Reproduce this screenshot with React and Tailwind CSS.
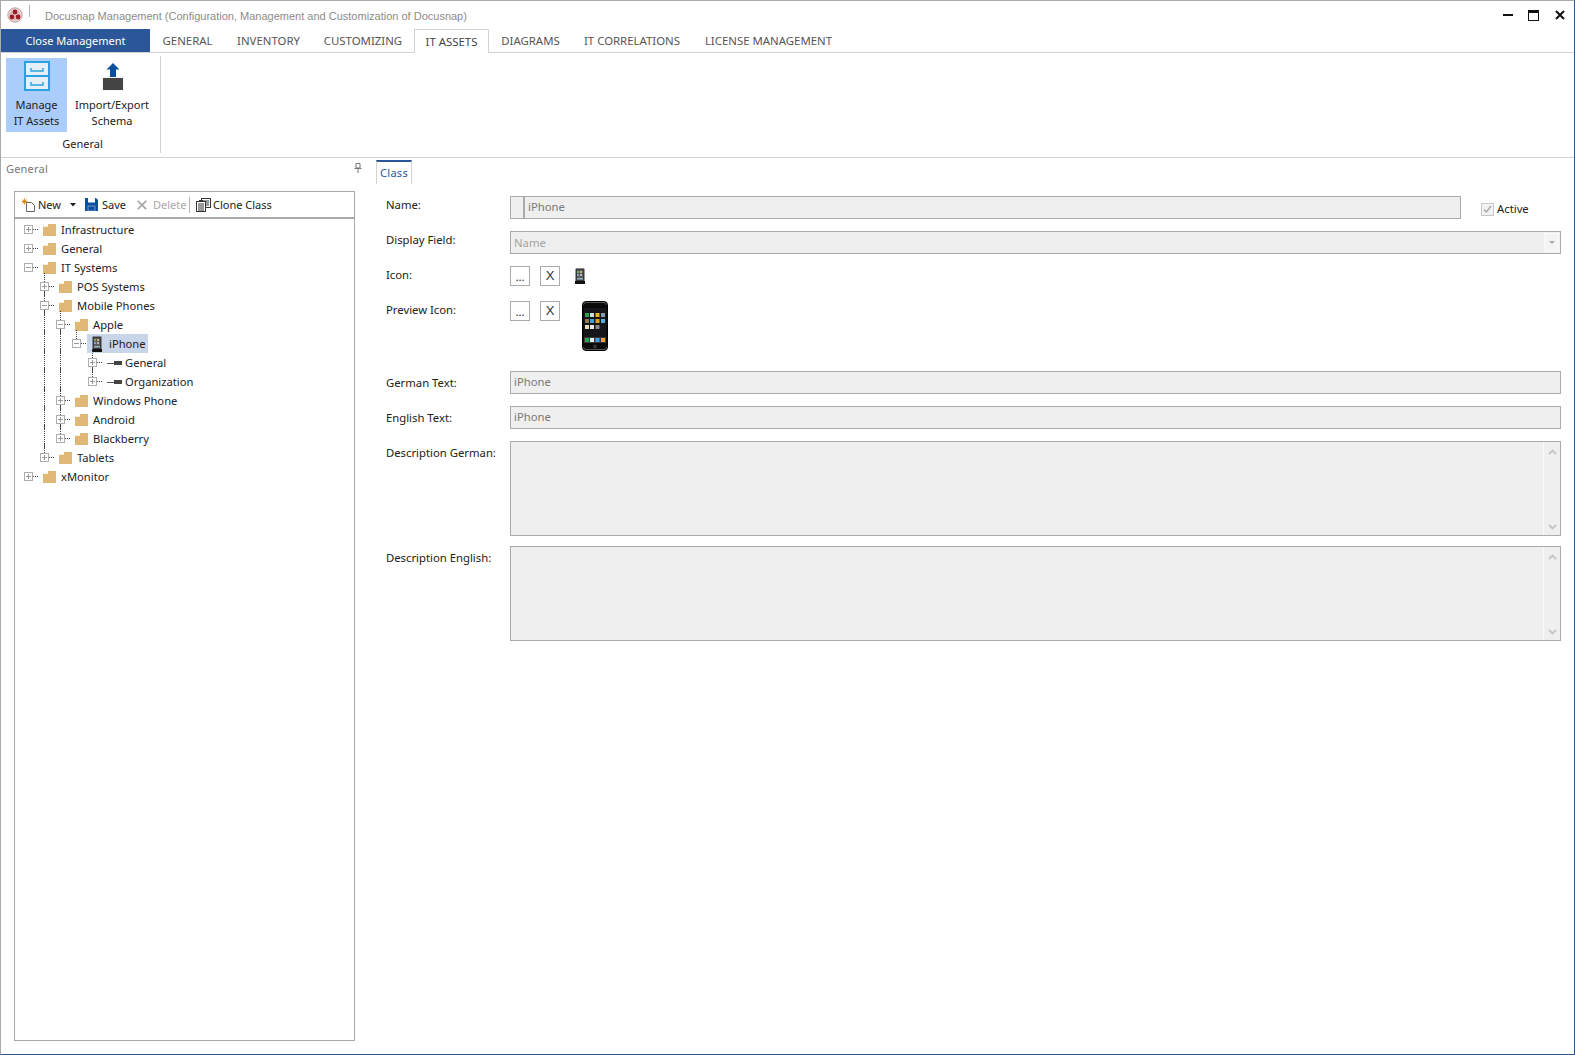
import React from "react";

const Tabs = [
  ["GENERAL", "w-[75px]"],
  ["INVENTORY", "w-[87px]"],
  ["CUSTOMIZING", "w-[102px]"],
  ["IT ASSETS", "w-[75px]", true],
  ["DIAGRAMS", "w-[83px]"],
  ["IT CORRELATIONS", "w-[120px]"],
  ["LICENSE MANAGEMENT", "w-[153px]"],
];

function Logo() {
  return (
    <svg width="16" height="16" viewBox="0 0 16 16">
      <circle cx="8" cy="8" r="7.2" fill="#e9d5d5" stroke="#b98a8a" strokeWidth="0.8" />
      <circle cx="8" cy="8" r="5.6" fill="#d9c0c0" />
      <circle cx="8" cy="5" r="2.4" fill="#a01c22" />
      <circle cx="4.9" cy="10" r="2.4" fill="#a01c22" />
      <circle cx="11.1" cy="10" r="2.4" fill="#a01c22" />
    </svg>
  );
}

function WindowButtons() {
  return (
    <div className="flex items-center h-full pr-[9px]">
      <svg width="10" height="12" viewBox="0 0 10 12" className="mr-[15px]">
        <rect x="0" y="5" width="10" height="2" fill="#111" />
      </svg>
      <svg width="11" height="11" viewBox="0 0 11 11" className="mr-[16px]">
        <rect x="0.5" y="0.5" width="10" height="10" fill="none" stroke="#111" />
        <rect x="0" y="0" width="11" height="3" fill="#111" />
      </svg>
      <svg width="10" height="10" viewBox="0 0 10 10">
        <path d="M1 1 L9 9 M9 1 L1 9" stroke="#111" strokeWidth="2" />
      </svg>
    </div>
  );
}

function CabinetIcon() {
  return (
    <svg width="26" height="30" viewBox="0 0 26 30">
      <rect x="0" y="0" width="26" height="30" fill="#2ba2e0" />
      <rect x="2" y="2" width="22" height="12" fill="#e6eef6" />
      <rect x="2" y="16" width="22" height="12" fill="#e6eef6" />
      <path d="M7 7 V10 H19 V7" fill="none" stroke="#2ba2e0" strokeWidth="1.4" />
      <path d="M7 21 V24 H19 V21" fill="none" stroke="#2ba2e0" strokeWidth="1.4" />
    </svg>
  );
}

function ImportIcon() {
  return (
    <svg width="22" height="28" viewBox="0 0 22 28" className="ml-[1px]">
      <rect x="0" y="13" width="22" height="15" fill="#f6f6f6" />
      <path d="M11 0 L17.5 6.5 H14 V14 H8 V6.5 H4.5 Z" fill="#0c4f9e" />
      <rect x="1" y="15" width="20" height="12" fill="#444" />
    </svg>
  );
}

function Folder() {
  return (
    <svg width="14" height="12" viewBox="0 0 14 13" preserveAspectRatio="none" className="shrink-0">
      <path d="M0 3 H5 V0 H13 V13 H0 Z" fill="#dfb878" />
    </svg>
  );
}

function SmallPhone() {
  return (
    <svg width="10" height="16" viewBox="0 0 10 16" className="shrink-0">
      <rect x="0.5" y="0" width="9" height="16" rx="1.5" fill="#3a3a3a" />
      <rect x="1" y="0" width="8" height="1" fill="#8a8a8a" />
      <rect x="2" y="2" width="6" height="10" fill="#5b5b5b" />
      <rect x="2" y="3" width="2" height="2" fill="#6fae6a" />
      <rect x="5" y="3" width="2" height="2" fill="#c9b36a" />
      <rect x="2" y="6" width="2" height="2" fill="#7fa6c9" />
      <rect x="5" y="6" width="2" height="2" fill="#b9b9b9" />
      <rect x="2" y="10" width="6" height="1.5" fill="#8fb0c4" />
      <rect x="0" y="13" width="10" height="3" fill="#111" />
    </svg>
  );
}

function ClassAttrIcon() {
  return (
    <svg width="15" height="6" viewBox="0 0 15 6" className="shrink-0">
      <rect x="0" y="3" width="7" height="1" fill="#555" />
      <rect x="7" y="1" width="8" height="4" fill="#444" />
    </svg>
  );
}

const apps = [
  [3, 12, "#1fa84f"], [8, 12, "#d8d8d8"], [13.5, 12, "#e4b822"], [19, 12, "#7f9db5"],
  [3, 18, "#8b7a58"], [8, 18, "#3f9edc"], [13.5, 18, "#e0a020"], [19, 18, "#4db0e6"],
  [3, 24, "#e8dfb8"], [8, 24, "#e8e8e8"], [13.5, 24, "#8a8a8a"],
  [3, 37, "#1fa84f"], [8, 37, "#e4eef6"], [13.5, 37, "#3f9edc"], [19, 37, "#eda128"],
];

function BigPhone() {
  return (
    <svg width="26" height="50" viewBox="0 0 26 50">
      <rect x="0.5" y="0.5" width="25" height="49" rx="3.5" fill="#0a0a0a" stroke="#000" />
      <path d="M1.5 4 Q1.5 1.5 4 1.5 H22 Q24.5 1.5 24.5 4 M1.5 46 Q1.5 48.5 4 48.5 H22 Q24.5 48.5 24.5 46" fill="none" stroke="#777" strokeWidth="0.7" />
      <rect x="2" y="7" width="22" height="35" fill="#15151a" />
      <rect x="2" y="36" width="22" height="6" fill="#3a3a3a" />
      {apps.map(([x, y, c], i) => (
        <rect key={i} x={x} y={y} width="4" height="4" fill={c} />
      ))}
      <circle cx="13" cy="45.5" r="2" fill="#333" />
    </svg>
  );
}

function Box({ open }) {
  return (
    <span className="relative z-10 w-[9px] h-[9px] border border-[#adadad] bg-white flex items-center justify-center shrink-0">
      <span className="absolute w-[5px] h-px bg-[#9a9a9a]" />
      {!open && <span className="absolute w-px h-[5px] bg-[#9a9a9a]" />}
    </span>
  );
}

const rows = [
  { t: "Infrastructure", l: 0, g: [] },
  { t: "General", l: 0, g: [] },
  { t: "IT Systems", l: 0, g: [], open: true },
  { t: "POS Systems", l: 1, g: [[1, 1]] },
  { t: "Mobile Phones", l: 1, g: [[1, 1]], open: true },
  { t: "Apple", l: 2, g: [[1, 1], [2, 1]], open: true },
  { t: "iPhone", l: 3, g: [[1, 1], [2, 1], [3, 0]], open: true, kind: "phone" },
  { t: "General", l: 4, g: [[1, 1], [2, 1], [4, 1]], kind: "attr" },
  { t: "Organization", l: 4, g: [[1, 1], [2, 1], [4, 0]], kind: "attr" },
  { t: "Windows Phone", l: 2, g: [[1, 1], [2, 1]] },
  { t: "Android", l: 2, g: [[1, 1], [2, 1]] },
  { t: "Blackberry", l: 2, g: [[1, 1], [2, 0]] },
  { t: "Tablets", l: 1, g: [[1, 0]] },
  { t: "xMonitor", l: 0, g: [] },
];

function TreeRow({ row }) {
  const { t, l, g, open, kind } = row;
  return (
    <div className="relative h-[19px] flex items-center text-[11.2px]" style={{ paddingLeft: 9 + l * 16 }}>
      {g.map(([c, full]) => (
        <span
          key={c}
          className="absolute top-[-4px] border-l border-dotted border-[#444]"
          style={{ left: 13 + c * 16, height: full ? 23 : 13 }}
        />
      ))}
      <Box open={open} />
      <span className="w-[5px] border-t border-dotted border-[#444] shrink-0" />
      {kind === "phone" ? (
        <span className="flex items-center h-[19px] bg-[#c9d5e8] ml-[1px] pl-[5px] pr-[2px]">
          <SmallPhone />
          <span className="ml-[7px] text-[#222]">{t}</span>
        </span>
      ) : kind === "attr" ? (
        <span className="flex items-center ml-[5px]">
          <ClassAttrIcon />
          <span className="ml-[3px] text-[#222]">{t}</span>
        </span>
      ) : (
        <span className="flex items-center ml-[5px]">
          <Folder />
          <span className="ml-[4px] text-[#222]">{t}</span>
        </span>
      )}
    </div>
  );
}

function Toolbar() {
  return (
    <div className="h-[27px] border-b-2 border-[#a9a9a9] flex items-center pl-[6px] text-[#222] shrink-0">
      <svg width="15" height="14" viewBox="0 0 15 14" className="mr-[2px]">
        <path d="M5.5 4.5 H10.5 L13.5 7.5 V13.5 H5.5 Z" fill="#fff" stroke="#666" />
        <path d="M3.5 0.5 V6.5 M0.5 3.5 H6.5 M1.4 1.4 L5.6 5.6 M5.6 1.4 L1.4 5.6" stroke="#e2901c" strokeWidth="1" />
      </svg>
      <span className="w-[26px]">New</span>
      <svg width="6" height="4" viewBox="0 0 6 4" className="ml-[6px] mr-[9px]">
        <path d="M0 0 H6 L3 3.5 Z" fill="#222" />
      </svg>
      <svg width="13" height="13" viewBox="0 0 13 13" className="mr-[4px]">
        <path d="M0 0 H11 L13 2 V13 H0 Z" fill="#0c4f9e" />
        <rect x="3" y="0" width="7" height="4.5" fill="#fff" />
        <rect x="3" y="8" width="7" height="5" fill="#0c4f9e" stroke="#fff" strokeWidth="0.4" />
      </svg>
      <span className="w-[26px]">Save</span>
      <svg width="10" height="10" viewBox="0 0 10 10" className="ml-[9px] mr-[6px]">
        <path d="M0.8 0.8 L9.2 9.2 M9.2 0.8 L0.8 9.2" stroke="#a8a8a8" strokeWidth="1.7" />
      </svg>
      <span className="w-[33px] text-[#a8a8a8]">Delete</span>
      <span className="w-px h-[16px] bg-[#b5b5b5] ml-[3px] mr-[6px]" />
      <svg width="15" height="14" viewBox="0 0 15 14" className="mr-[2px]">
        <rect x="5.5" y="0.5" width="9" height="9" fill="#fff" stroke="#333" />
        <path d="M7 3 H13 M7 5 H13 M7 7 H13" stroke="#333" />
        <rect x="0.5" y="3.5" width="9" height="10" fill="#fff" stroke="#333" />
        <path d="M2 6 H8 M2 8 H8 M2 10 H8 M2 12 H8" stroke="#333" />
        <rect x="3" y="2" width="4" height="2" fill="#333" />
      </svg>
      <span>Clone Class</span>
    </div>
  );
}

function Label({ children, low }) {
  return <div className={low ? "w-[124px] shrink-0 text-[#222] pt-[4px]" : "w-[124px] shrink-0 text-[#222] pt-[1px]"}>{children}</div>;
}

function TextField({ value }) {
  return (
    <div className="flex-1 h-[23px] border border-[#ababab] bg-[#efefef] flex items-center pl-[3px] pb-[2px] text-[#7a7a7a]">
      {value}
    </div>
  );
}

function PickerButtons() {
  return (
    <div className="flex gap-[10px]">
      <div className="w-[20px] h-[20px] border border-[#ababab] bg-white flex items-end justify-center text-[#222] leading-[16px]">...</div>
      <div className="w-[20px] h-[20px] border border-[#ababab] bg-white flex items-center justify-center text-[#333] font-['Liberation_Sans',sans-serif] text-[13px]">X</div>
    </div>
  );
}

function Chevron({ down }) {
  return (
    <svg width="9" height="6" viewBox="0 0 9 6">
      <path d={down ? "M1 1 L4.5 4.5 L8 1" : "M1 5 L4.5 1.5 L8 5"} fill="none" stroke="#c4c4c4" strokeWidth="1.8" />
    </svg>
  );
}

function TextArea() {
  return (
    <div className="flex-1 h-[95px] border border-[#ababab] bg-[#efefef] flex justify-end">
      <div className="w-[17px] border-l border-[#fafafa] flex flex-col items-center justify-between pt-[7px] pb-[5px]">
        <Chevron />
        <Chevron down />
      </div>
    </div>
  );
}

export default function App() {
  return (
    <div className="w-[1575px] h-[1055px] bg-white flex flex-col overflow-hidden border-t border-l border-r border-b border-t-[#aaaaaa] border-l-[#aaaaaa] border-r-[#2b579a] border-b-[#2b579a] font-['Noto_Sans',sans-serif] text-[11px] leading-[16px]">
      <div className="h-[28px] flex items-center shrink-0">
        <div className="ml-[6px] mr-[6px]"><Logo /></div>
        <span className="w-px h-[12px] bg-[#b0b0b0] mb-[8px]" />
        <span className="ml-[15px] mt-[2px] flex-1 font-['Liberation_Sans',sans-serif] text-[11px] text-[#8c8c8c]">
          Docusnap Management (Configuration, Management and Customization of Docusnap)
        </span>
        <WindowButtons />
      </div>

      <div className="h-[24px] flex border-b border-[#d3d3d3] shrink-0">
        <div className="w-[149px] h-[23px] pt-[1px] bg-[#2b579a] text-white text-[11px] flex items-center justify-center">Close Management</div>
        {Tabs.map(([label, w, active]) => (
          <div
            key={label}
            className={
              active
                ? `${w} h-[24px] pt-[1px] bg-white border border-b-0 border-[#d3d3d3] flex items-center justify-center text-[#444] text-[11.4px]`
                : `${w} h-[23px] pt-[1px] flex items-center justify-center text-[#555] text-[11.4px]`
            }
          >
            {label}
          </div>
        ))}
      </div>

      <div className="h-[105px] border-b border-[#d3d3d3] flex items-start shrink-0 pt-[3px] text-[#222] text-[11px]">
        <div className="w-[160px] h-[97px] border-r border-[#d3d3d3] flex flex-col">
          <div className="flex pl-[5px] pt-[2px]">
            <div className="w-[61px] h-[74px] bg-[#abcdfb] flex flex-col items-center pt-[3px]">
              <CabinetIcon />
              <div className="mt-[6px] text-center leading-[16px]">Manage<br />IT Assets</div>
            </div>
            <div className="w-[90px] h-[74px] flex flex-col items-center pt-[5px]">
              <ImportIcon />
              <div className="mt-[6px] text-center leading-[16px]">Import/Export<br />Schema</div>
            </div>
          </div>
          <div className="text-center mt-[4px] pl-[4px]">General</div>
        </div>
      </div>

      <div className="flex-1 flex min-h-0">
        <div className="w-[373px] shrink-0 flex flex-col">
          <div className="h-[33px] pl-[5px] flex items-start justify-between pr-[12px] pt-[3px] text-[#777] shrink-0">
            <span className="tracking-[0.2px]">General</span>
            <svg width="8" height="10" viewBox="0 0 8 10" className="mt-[2px]">
              <path d="M2 0.5 H6 V5 H2 Z M0.5 5.5 H7.5 M4 5.5 V10" fill="none" stroke="#777" />
            </svg>
          </div>
          <div className="ml-[13px] w-[341px] flex-1 mb-[13px] border border-[#a9a9a9] flex flex-col min-h-0">
            <Toolbar />
            <div className="pt-[1px]">
              {rows.map((r, i) => (
                <TreeRow key={i} row={r} />
              ))}
            </div>
          </div>
        </div>

        <div className="flex-1 min-w-0 flex flex-col pr-[13px]">
          <div className="h-[38px] pt-[2px] pl-[2px] shrink-0">
            <div className="w-[36px] h-[24px] border-t-2 border-t-[#2b579a] border-x border-x-[#d3d3d3] flex items-center justify-center text-[#2b579a] tracking-[0.3px]">Class</div>
          </div>
          <div className="flex flex-col gap-[12px] pl-[12px] text-[11.3px]">
            <div className="flex items-start h-[23px]">
              <Label>Name:</Label>
              <div className="flex-1 h-[23px] border border-[#ababab] bg-[#efefef] flex items-center pb-[2px] text-[#7a7a7a]">
                <span className="w-[14px] h-[21px] -mb-[2px] border-r-2 border-[#ababab]" />
                <span className="ml-[3px]">iPhone</span>
              </div>
              <div className="w-[100px] shrink-0 flex items-center pl-[20px] pt-[5px] text-[#222]">
                <span className="w-[13px] h-[13px] border border-[#c8c8c8] bg-[#f2f2f2] flex items-center justify-center">
                  <svg width="9" height="8" viewBox="0 0 9 8">
                    <path d="M1 4.5 L3.4 7 L8 1" fill="none" stroke="#a8a8a8" strokeWidth="1.4" />
                  </svg>
                </span>
                <span className="ml-[3px]">Active</span>
              </div>
            </div>

            <div className="flex items-start h-[23px]">
              <Label>Display Field:</Label>
              <div className="flex-1 h-[23px] border border-[#ababab] bg-[#efefef] flex items-center justify-between pl-[3px] pr-[1px] text-[#a3a3a3]">
                <span>Name</span>
                <span className="w-[15px] h-[19px] border border-[#fafafa] bg-[#f4f4f4] flex items-center justify-center">
                  <svg width="6" height="3" viewBox="0 0 6 3"><path d="M0 0 H6 L3 3 Z" fill="#a8a8a8" /></svg>
                </span>
              </div>
            </div>

            <div className="flex items-start h-[20px]">
              <Label>Icon:</Label>
              <PickerButtons />
              <div className="ml-[15px] pt-[2px]"><SmallPhone /></div>
            </div>

            <div className="flex items-start h-[50px] mt-[3px]">
              <Label>Preview Icon:</Label>
              <PickerButtons />
              <div className="ml-[22px]"><BigPhone /></div>
            </div>

            <div className="flex items-start mt-[8px]">
              <Label low>German Text:</Label>
              <TextField value="iPhone" />
            </div>

            <div className="flex items-start">
              <Label low>English Text:</Label>
              <TextField value="iPhone" />
            </div>

            <div className="flex items-start">
              <Label low>Description German:</Label>
              <TextArea />
            </div>

            <div className="flex items-start -mt-[2px]">
              <Label low>Description English:</Label>
              <TextArea />
            </div>
          </div>
        </div>
      </div>
    </div>
  );
}
